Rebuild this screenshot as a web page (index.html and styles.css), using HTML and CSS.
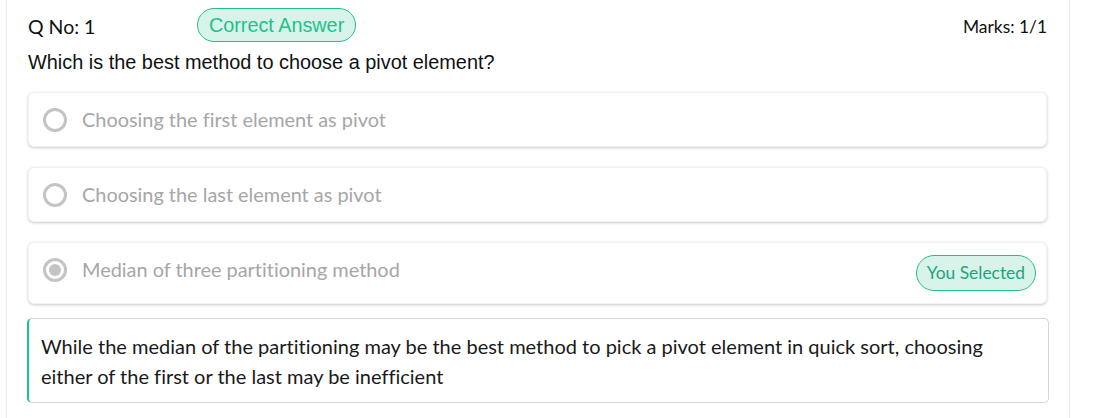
FILE: index.html
```html
<!DOCTYPE html>
<html lang="en">
<head>
<meta charset="utf-8">
<title>Question Review</title>
<link rel="stylesheet" href="styles.css">
</head>
<body>
<div class="panel">
  <div class="q-header">
    <div class="q-no">Q No: 1</div>
    <div class="status-badge">Correct Answer</div>
    <div class="marks">Marks: 1/1</div>
  </div>
  <div class="q-text">Which is the best method to choose a pivot element?</div>

  <div class="option">
    <span class="radio"></span>
    <span class="opt-label">Choosing the first element as pivot</span>
  </div>
  <div class="option">
    <span class="radio"></span>
    <span class="opt-label">Choosing the last element as pivot</span>
  </div>
  <div class="option option-selected">
    <span class="radio radio-checked"></span>
    <span class="opt-label">Median of three partitioning method</span>
    <span class="selected-badge">You Selected</span>
  </div>

  <div class="explanation">While the median of the partitioning may be the best method to pick a pivot element in quick sort, choosing either of the first or the last may be inefficient</div>
</div>
</body>
</html>
```

FILE: styles.css
```css
html, body {
  margin: 0;
  padding: 0;
  background: #ffffff;
}

body {
  font-family: Lato, "Noto Sans", sans-serif;
  font-variant-ligatures: none;
  color: #1f1f1f;
  width: 1118px;
  height: 418px;
  overflow: hidden;
}

.panel {
  margin-left: 6px;
  width: 1019px;
  height: 418px;
  border-left: 1px solid #ececec;
  border-right: 1px solid #ececec;
  padding: 8px 22px 0 21px;
}

.q-header {
  display: flex;
  align-items: center;
  height: 34px;
}

.q-no {
  width: 169px;
  font-size: 19.5px;
  color: #111;
  padding-top: 2px;
}

.status-badge {
  height: 32px;
  line-height: 32px;
  padding: 0 11px;
  border: 1px solid #1ec28b;
  border-radius: 17px;
  background: #d7f3ea;
  color: #1ec28b;
  font-family: "Liberation Sans", Arial, sans-serif;
  font-size: 19.8px;
}

.marks {
  margin-left: auto;
  font-size: 17.4px;
  color: #111;
  padding-top: 3px;
}

.q-text {
  font-family: "Liberation Sans", Arial, sans-serif;
  font-size: 19.9px;
  color: #111;
  margin-top: 6px;
  line-height: 28px;
  margin-bottom: 16px;
}

.option {
  display: flex;
  align-items: flex-start;
  width: 1019px;
  box-sizing: border-box;
  padding: 12px 10px 11px 14px;
  margin-bottom: 20px;
  border: 1px solid #f2f2f2;
  border-radius: 6px;
  box-shadow: 0 1px 3px rgba(0, 0, 0, 0.22);
  background: #fff;
}

.option-selected {
  margin-bottom: 14px;
  padding-bottom: 12px;
}

.radio {
  flex: none;
  width: 18px;
  height: 18px;
  border: 3px solid #c4c4c4;
  border-radius: 50%;
  margin-top: 3px;
  margin-right: 15px;
  position: relative;
  background: #fff;
}

.radio-checked::after {
  content: "";
  position: absolute;
  left: 3px;
  top: 3px;
  width: 12px;
  height: 12px;
  border-radius: 50%;
  background: #c4c4c4;
}

.opt-label {
  font-size: 19.9px;
  line-height: 30px;
  color: #a6a6a6;
  margin-top: -1px;
  padding-bottom: 1px;
}

.selected-badge {
  margin-left: auto;
  box-sizing: border-box;
  height: 36px;
  line-height: 34px;
  padding: 0 10px;
  border: 1px solid #1ec28b;
  border-radius: 18px;
  background: #d7f3ea;
  color: #1ea57a;
  font-size: 17.4px;
}

.explanation {
  width: 1022px;
  box-sizing: border-box;
  margin-left: -1px;
  padding: 12px 20px 11px 12px;
  border: 1px solid #d4d4dc;
  border-left: 2px solid #1ec28b;
  border-radius: 5px;
  font-size: 20px;
  line-height: 30px;
  color: #1a1a1a;
}
```
